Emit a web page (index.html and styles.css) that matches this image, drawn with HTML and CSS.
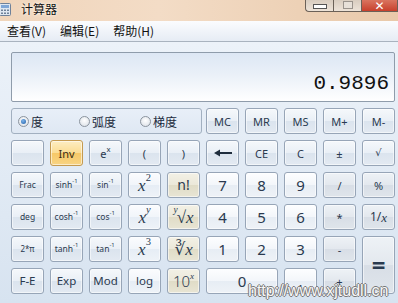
FILE: index.html
```html
<!DOCTYPE html>
<html>
<head>
<meta charset="utf-8">
<link rel="stylesheet" href="styles.css">
</head>
<body>
<div class="window">
  <div class="titlebar">
    <svg class="appicon" width="13" height="13" viewBox="0 0 13 13">
      <rect x="0.5" y="0.5" width="11" height="12" rx="1" fill="#dfe7f1" stroke="#6f8199"/>
      <rect x="2" y="2" width="8" height="3" fill="#7fa6d6"/>
      <rect x="2" y="6.5" width="2" height="1.5" fill="#6f8199"/>
      <rect x="5" y="6.5" width="2" height="1.5" fill="#6f8199"/>
      <rect x="8" y="6.5" width="2" height="1.5" fill="#6f8199"/>
      <rect x="2" y="9.5" width="2" height="1.5" fill="#6f8199"/>
      <rect x="5" y="9.5" width="2" height="1.5" fill="#6f8199"/>
      <rect x="8" y="9.5" width="2" height="1.5" fill="#6f8199"/>
    </svg>
    <span class="title">计算器</span>
    <div class="winbtns">
      <span class="wb wb-min"><span class="bar"></span></span>
      <span class="wb wb-max"><span class="box"></span></span>
      <span class="wb wb-close">✕</span>
    </div>
  </div>
  <div class="menubar">
    <span>查看(V)</span>
    <span>编辑(E)</span>
    <span>帮助(H)</span>
  </div>
  <div class="content">
    <div class="display">0.9896</div>
    <div class="keys">
      <div class="radios">
        <span class="radio"><span class="dot on"></span>度</span>
        <span class="radio"><span class="dot"></span>弧度</span>
        <span class="radio"><span class="dot"></span>梯度</span>
      </div>
      <div class="k">MC</div>
      <div class="k">MR</div>
      <div class="k">MS</div>
      <div class="k">M+</div>
      <div class="k">M-</div>

      <div class="k"></div>
      <div class="k inv">Inv</div>
      <div class="k">e<sup>x</sup></div>
      <div class="k">(</div>
      <div class="k">)</div>
      <div class="k"><svg width="18" height="8" viewBox="0 0 18 8"><path d="M0 4 L6 0.5 L6 3 L18 3 L18 5 L6 5 L6 7.5 Z" fill="#1f2d3d"/></svg></div>
      <div class="k">CE</div>
      <div class="k">C</div>
      <div class="k">±</div>
      <div class="k sq">√</div>

      <div class="k sm">Frac</div>
      <div class="k sm">sinh<sup>-1</sup></div>
      <div class="k sm">sin<sup>-1</sup></div>
      <div class="k wh mx"><i>x</i><sup>2</sup></div>
      <div class="k bg nf">n!</div>
      <div class="k num">7</div>
      <div class="k num">8</div>
      <div class="k num">9</div>
      <div class="k op">/</div>
      <div class="k op">%</div>

      <div class="k sm">deg</div>
      <div class="k sm">cosh<sup>-1</sup></div>
      <div class="k sm">cos<sup>-1</sup></div>
      <div class="k wh mx"><i>x</i><sup><i>y</i></sup></div>
      <div class="k bg mx"><sup class="rs"><i>y</i></sup>√<i>x</i></div>
      <div class="k num">4</div>
      <div class="k num">5</div>
      <div class="k num">6</div>
      <div class="k op">*</div>
      <div class="k op rec">1/<i>x</i></div>

      <div class="k xs">2*π</div>
      <div class="k sm">tanh<sup>-1</sup></div>
      <div class="k sm">tan<sup>-1</sup></div>
      <div class="k wh mx"><i>x</i><sup>3</sup></div>
      <div class="k bg mx">∛<i>x</i></div>
      <div class="k num">1</div>
      <div class="k num">2</div>
      <div class="k num">3</div>
      <div class="k op">-</div>
      <div class="k op eq">=</div>

      <div class="k md">F-E</div>
      <div class="k md">Exp</div>
      <div class="k md">Mod</div>
      <div class="k wh md">log</div>
      <div class="k bg ten">10<sup><i>x</i></sup></div>
      <div class="k num zero">0</div>
      <div class="k num">.</div>
      <div class="k op">+</div>
    </div>
  </div>
  <div class="watermark">http://www.xjtudll.cn</div>
</div>
</body>
</html>
```
FILE: styles.css
```css
html, body {
  margin: 0;
  padding: 0;
}
body {
  width: 398px;
  height: 303px;
  overflow: hidden;
  font-family: "Noto Sans", "Noto Sans CJK SC", sans-serif;
}
.window {
  position: relative;
  width: 398px;
  height: 303px;
  overflow: hidden;
  background: #dfe8f3;
}
.titlebar {
  height: 21px;
  box-sizing: border-box;
  display: flex;
  align-items: flex-start;
  background: linear-gradient(90deg, #f0d5bb 0%, #f3dcc6 40%, #edd1b6 75%, #e9c9aa 100%);
}
.appicon {
  margin: 3px 0 0 -1px;
}
.title {
  margin: 1px 0 0 9px;
  font-family: "Noto Sans CJK SC", sans-serif;
  font-size: 12px;
  line-height: 16px;
  color: #111;
  text-shadow: 0 0 4px #fff6ec, 0 0 2px #fff6ec;
}
.winbtns {
  margin-left: auto;
  display: flex;
  height: 12px;
}
.wb {
  box-sizing: border-box;
  height: 12px;
  display: flex;
  align-items: center;
  justify-content: center;
  border: 1px solid #6b6158;
  border-top: none;
}
.wb-min {
  width: 28px;
  border-radius: 0 0 0 4px;
  border-right: none;
  background: linear-gradient(#d9cdc0, #ede3d8);
}
.wb-max {
  width: 28px;
  border-right: none;
  background: linear-gradient(#d9cdc0, #ede3d8);
}
.wb-min .bar {
  width: 12px;
  height: 3px;
  background: #fff;
  border: 1px solid #555;
  margin-top: 1px;
}
.wb-max .box {
  width: 8px;
  height: 6px;
  border: 1px solid #9a938c;
  background: #e7e0d8;
  margin-top: -2px;
}
.wb-close {
  width: 37px;
  background: linear-gradient(#d9745f, #c8402c);
  color: #fff;
  font-size: 12px;
  font-weight: bold;
  line-height: 10px;
  font-family: "DejaVu Sans", sans-serif;
}
.menubar {
  height: 21px;
  box-sizing: border-box;
  display: flex;
  align-items: center;
  gap: 14px;
  padding: 0 0 1px 7px;
  background: linear-gradient(#fbfcfe, #e6ecf4);
  border-bottom: 1px solid #a9b3bf;
  font-family: "Noto Sans CJK SC", sans-serif;
  font-size: 12px;
  color: #111;
}
.content {
  height: 261px;
  box-sizing: border-box;
  padding: 10px 3px 0 11px;
  background: linear-gradient(#ecf2f9, #d7e3f0);
}
.display {
  height: 50px;
  box-sizing: border-box;
  border: 1px solid #8f9cab;
  border-radius: 2px;
  background: linear-gradient(#dde7f4 0%, #eaf0f8 45%, #ffffff 100%);
  display: flex;
  align-items: flex-end;
  justify-content: flex-end;
  padding: 0 5px 5px 0;
  font-family: "Liberation Mono", monospace;
  font-size: 21px;
  line-height: 24px;
  color: #111;
}
.keys {
  margin-top: 6px;
  display: grid;
  grid-template-columns: repeat(10, 33px);
  grid-auto-rows: 26px;
  column-gap: 6px;
  row-gap: 6px;
}
.radios {
  grid-column: 1 / span 5;
  box-sizing: border-box;
  border: 1px solid #a2b0c0;
  border-radius: 3px;
  margin-right: -2px;
  background: linear-gradient(#e8eff8, #dfe8f3);
  display: flex;
  align-items: center;
  padding-left: 6px;
  font-family: "Noto Sans CJK SC", sans-serif;
  font-size: 12px;
  color: #1b2a3c;
}
.radio {
  width: 66px;
  display: flex;
  align-items: center;
  gap: 2px;
}
.dot {
  width: 11px;
  height: 11px;
  box-sizing: border-box;
  border-radius: 50%;
  border: 1px solid #8b949e;
  background: radial-gradient(circle at 50% 40%, #ffffff, #d7dde4);
  display: flex;
  align-items: center;
  justify-content: center;
}
.dot.on::after {
  content: "";
  width: 5px;
  height: 5px;
  border-radius: 50%;
  background: radial-gradient(circle at 40% 35%, #7fb4ea, #1c5ea8);
}
.k {
  box-sizing: border-box;
  border: 1px solid #97a5b7;
  border-radius: 3px;
  background: linear-gradient(#f5f8fb 0%, #e9eff6 50%, #dbe4ee 51%, #e3eaf2 100%);
  box-shadow: inset 0 0 0 1px rgba(255, 255, 255, 0.55);
  display: flex;
  align-items: center;
  justify-content: center;
  font-size: 11px;
  color: #2a3a4f;
  line-height: 1;
}
.k sup {
  font-size: 0.7em;
  position: relative;
  top: -0.45em;
  vertical-align: baseline;
}
.k.sq {
  font-family: "DejaVu Sans", sans-serif;
  font-size: 10px;
}
.k.inv {
  border-color: #c49a50;
  background: linear-gradient(#fdedc2 0%, #fbdc92 50%, #f6c867 51%, #f8d484 100%);
  color: #3a2c14;
}
.k.sm {
  font-size: 8.5px;
}
.k.xs {
  font-size: 8px;
}
.k.md {
  font-size: 11.5px;
}
.k.wh {
  background: linear-gradient(#fbfcfe 0%, #f1f5fa 50%, #e6edf5 51%, #eef3f8 100%);
}
.k.bg {
  background: linear-gradient(#f3f1e6 0%, #ebe8d9 50%, #e0dcc7 51%, #e8e5d4 100%);
}
.k.num {
  font-size: 15px;
  background: linear-gradient(#fdfeff 0%, #f3f6fa 50%, #e7edf4 51%, #eef2f7 100%);
}
.k.op {
  background: linear-gradient(#eef2f6 0%, #e3e8ee 50%, #d8dee6 51%, #dfe5eb 100%);
}
.k.mx {
  font-family: "Liberation Serif", "DejaVu Serif", serif;
  font-size: 17px;
}
.k.mx sup {
  font-size: 0.62em;
  top: -0.6em;
}
.k.mx sup.rs {
  font-size: 0.55em;
  top: -0.7em;
  margin-right: -1px;
}
.k.nf {
  font-size: 14px;
}
.k.rec {
  font-size: 12px;
}
.k.rec i {
  font-family: "Liberation Serif", serif;
  font-size: 13px;
}
.k.ten {
  font-size: 15px;
  font-weight: 300;
}
.k.ten sup {
  font-family: "Liberation Serif", serif;
  font-size: 0.6em;
}
.k.eq {
  grid-row: span 2;
  font-size: 24px;
  font-weight: bold;
}
.k.zero {
  grid-column: span 2;
}
.watermark {
  position: absolute;
  left: 248px;
  top: 282px;
  font-family: "Liberation Sans", sans-serif;
  font-size: 16px;
  color: #f7f7f7;
  text-shadow: 1px 0 0 #777, -1px 0 0 #777, 0 1px 0 #777, 0 -1px 0 #777;
}
```
